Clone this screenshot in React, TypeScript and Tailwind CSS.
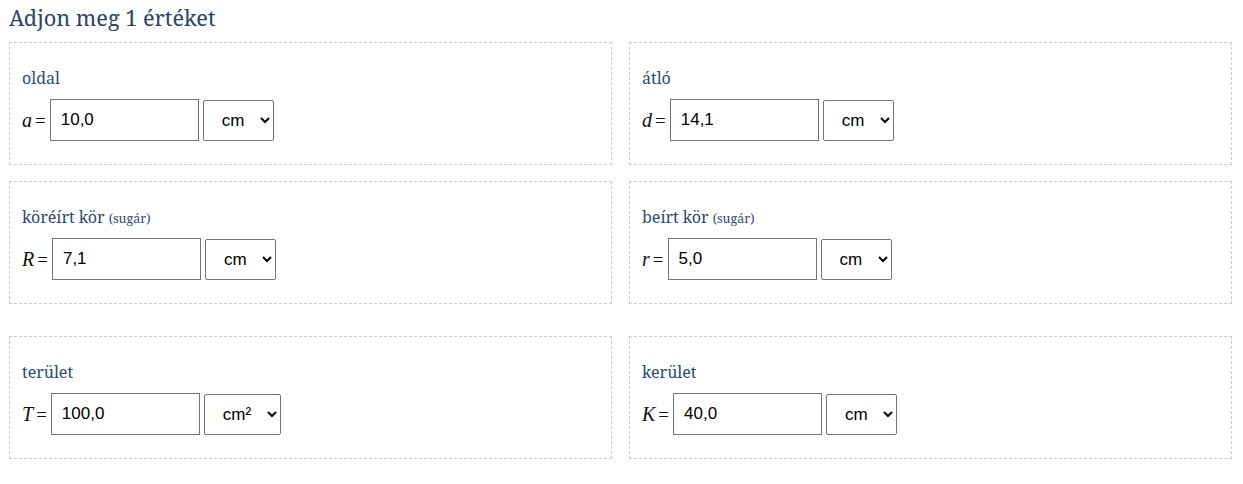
import React from "react";

type Field = {
  label: string;
  note?: string;
  sym: string;
  value: string;
  unit: string;
};

const serif = { fontFamily: '"Liberation Serif", "DejaVu Serif", serif' };
const sans = { fontFamily: '"Liberation Sans", Arial, sans-serif' };

function Box({ f }: { f: Field }) {
  return (
    <div className="border border-dashed border-[#cccccc] px-3 pt-[24px] pb-[23px]">
      <div
        className="h-[22px] text-[16px] leading-[22px] text-[#2d4a75]"
        style={{ fontFamily: '"Noto Serif", "Liberation Serif", serif' }}
      >
        {f.label}
        {f.note && (
          <span className="ml-[4px] align-baseline text-[12.5px] leading-none">
            ({f.note})
          </span>
        )}
      </div>
      <div className="mt-[10px] flex h-[42px] items-center">
        <span
          className="mr-[4px] whitespace-nowrap text-[20px] leading-none text-[#111]"
          style={serif}
        >
          <i>{f.sym}</i>
          <span className="ml-[3px] text-[19px]">=</span>
        </span>
        <input
          readOnly
          value={f.value}
          className="h-[42px] w-[149px] border border-[#767676] bg-white px-[10px] text-[17px] text-black outline-none"
          style={sans}
        />
        <select
          defaultValue={f.unit}
          className={`ml-[4px] h-[41px] ${f.unit === "cm²" ? "w-[77px]" : "w-[71px]"} rounded-[2px] border border-[#767676] bg-white pl-[14px] text-[17px] text-black`}
          style={sans}
        >
          <option>{f.unit}</option>
        </select>
      </div>
    </div>
  );
}

const rows: Field[][] = [
  [
    { label: "oldal", sym: "a", value: "10,0", unit: "cm" },
    { label: "átló", sym: "d", value: "14,1", unit: "cm" },
  ],
  [
    { label: "köréírt kör", note: "sugár", sym: "R", value: "7,1", unit: "cm" },
    { label: "beírt kör", note: "sugár", sym: "r", value: "5,0", unit: "cm" },
  ],
];

const bottom: Field[] = [
  { label: "terület", sym: "T", value: "100,0", unit: "cm²" },
  { label: "kerület", sym: "K", value: "40,0", unit: "cm" },
];

export default function App() {
  return (
    <div className="min-h-[484px] bg-white px-[9px] pt-[4px]">
      <h1
        className="text-[21.7px] leading-[28px] text-[#2b4272]"
        style={{ fontFamily: '"Noto Serif", "Liberation Serif", serif' }}
      >
        Adjon meg 1 értéket
      </h1>
      <div className="mt-[10px] flex flex-col gap-[16px]">
        {rows.map((r, i) => (
          <div key={i} className="grid grid-cols-2 gap-[17px] pr-[2px]">
            {r.map((f) => (
              <Box key={f.sym} f={f} />
            ))}
          </div>
        ))}
      </div>
      <div className="mt-[32px] grid grid-cols-2 gap-[17px] pr-[2px]">
        {bottom.map((f) => (
          <Box key={f.sym} f={f} />
        ))}
      </div>
    </div>
  );
}
